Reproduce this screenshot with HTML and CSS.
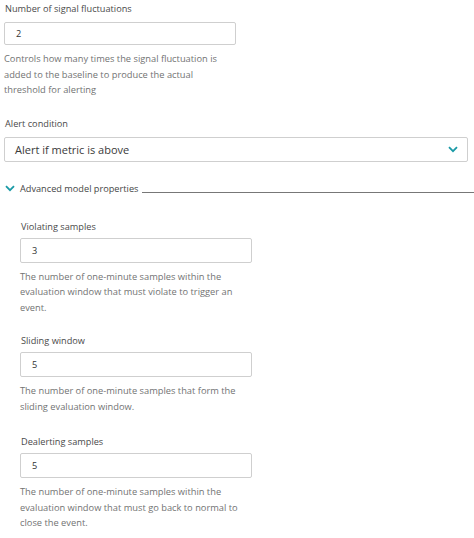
FILE: index.html
```html
<!DOCTYPE html>
<html>
<head>
<meta charset="utf-8">
<link rel="stylesheet" href="styles.css">
</head>
<body>
<div class="page">
  <div class="field f1">
    <div class="label">Number of signal fluctuations</div>
    <div class="input narrow">2</div>
    <div class="help">Controls how many times the signal fluctuation is<br>added to the baseline to produce the actual<br>threshold for alerting</div>
  </div>
  <div class="field f2">
    <div class="label">Alert condition</div>
    <div class="select">
      <span>Alert if metric is above</span>
      <svg class="chev" width="10" height="7" viewBox="0 0 10 7"><path d="M1 1.2 L5 5.2 L9 1.2" fill="none" stroke="#1a9aa6" stroke-width="1.8"/></svg>
    </div>
  </div>
  <div class="adv">
    <svg class="chev2" width="10" height="7" viewBox="0 0 10 7"><path d="M1 1.2 L5 5.2 L9 1.2" fill="none" stroke="#1a9aa6" stroke-width="1.8"/></svg>
    <span class="adv-text">Advanced model properties</span>
    <span class="rule"></span>
  </div>
  <div class="sub">
    <div class="field">
      <div class="label">Violating samples</div>
      <div class="input">3</div>
      <div class="help">The number of one-minute samples within the<br>evaluation window that must violate to trigger an<br>event.</div>
    </div>
    <div class="field">
      <div class="label">Sliding window</div>
      <div class="input">5</div>
      <div class="help">The number of one-minute samples that form the<br>sliding evaluation window.</div>
    </div>
    <div class="field">
      <div class="label">Dealerting samples</div>
      <div class="input">5</div>
      <div class="help">The number of one-minute samples within the<br>evaluation window that must go back to normal to<br>close the event.</div>
    </div>
  </div>
</div>
</body>
</html>
```
FILE: styles.css
```css
html, body { margin: 0; padding: 0; background: #fff; }
body { font-family: "Open Sans", "DejaVu Sans", sans-serif; color: #454646; }
.page { padding: 3px 6px 0 4px; width: 464px; }
.field { display: flex; flex-direction: column; }
.label { font-size: 9.2px; line-height: 12px; margin-left: 1px; color: #4a4a4a; }
.input {
  margin-top: 7px;
  height: 23px; box-sizing: border-box;
  border: 1px solid #cfcfcf; border-radius: 2px;
  font-size: 9.2px; line-height: 21px; padding-left: 11px; color: #333;
  width: 232px;
}
.help { font-size: 9.3px; line-height: 15.5px; color: #727373; margin-top: 6px; }
.f2 { margin-top: 20px; }
.select {
  margin-top: 7px; height: 25px; box-sizing: border-box;
  border: 1px solid #cfcfcf; border-radius: 2px;
  display: flex; align-items: center; justify-content: space-between;
  padding: 0 9px 0 10px; font-size: 11px; color: #3a3a3a;
}
.adv { display: flex; align-items: center; margin-top: 21px; }
.chev2 { margin-left: 1px; margin-right: 5px; }
.adv-text { font-size: 9.2px; line-height: 12px; color: #454646; }
.rule { flex: 1; height: 1px; background: #777; margin-left: 4px; margin-top: 7px; margin-right: -6px; }
.sub { padding-left: 16px; display: flex; flex-direction: column; gap: 20px; margin-top: 26px; }
.sub .field:last-child { margin-top: 2px; }
.sub .input { width: 232px; height: 25px; line-height: 23px; margin-top: 5px; }
```
